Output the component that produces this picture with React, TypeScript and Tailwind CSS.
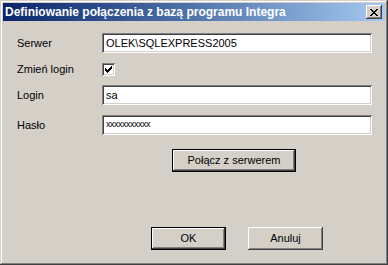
import { useState } from 'react'

const sunken =
  'shadow-[inset_1px_1px_#808080,inset_-1px_-1px_#ffffff,inset_2px_2px_#404040,inset_-2px_-2px_#d4d0c8]'
const raised =
  'shadow-[inset_-1px_-1px_#404040,inset_1px_1px_#ffffff,inset_-2px_-2px_#808080,inset_2px_2px_#d4d0c8]'
const raisedDefault =
  'border border-black shadow-[inset_-1px_-1px_#404040,inset_1px_1px_#ffffff,inset_-2px_-2px_#808080,inset_2px_2px_#d4d0c8]'

function Field({ label, value, masked }: { label: string; value: string; masked?: boolean }) {
  return (
    <div className="flex items-center h-[20px]">
      <span className="w-[85px]">{label}</span>
      <div className={`flex-1 h-[20px] bg-white pl-[4px] flex items-center ${sunken}`}>
        {masked ? <span className="text-[9px] tracking-[-0.5px]">{value}</span> : value}
      </div>
    </div>
  )
}

export default function App() {
  const [checked, setChecked] = useState(true)

  return (
    <div
      className="w-[388px] h-[265px] bg-[#d4d0c8] p-[3px] flex flex-col text-[11px] text-black shadow-[inset_-1px_-1px_#404040,inset_1px_1px_#d4d0c8,inset_-2px_-2px_#808080,inset_2px_2px_#ffffff]"
      style={{ fontFamily: '"Liberation Sans", Arial, sans-serif' }}
    >
      {/* Title bar */}
      <div className="h-[18px] flex items-center justify-between pl-[2px] pr-[3px] bg-gradient-to-r from-[#0a246a] to-[#a6caf0]">
        <span className="text-white font-bold text-[12px]">
          Definiowanie połączenia z bazą programu Integra
        </span>
        <button className={`w-[16px] h-[14px] bg-[#d4d0c8] flex items-center justify-center ${raised}`}>
          <svg width="8" height="7" viewBox="0 0 8 7">
            <path d="M0 0h2v1h1v1h2V1h1V0h2v1H7v1H6v1H5v1h1v1h1v1h1v1H6V6H5V5H3v1H2v1H0V6h1V5h1V4h1V3H2V2H1V1H0z" fill="#000" />
          </svg>
        </button>
      </div>

      {/* Form */}
      <div className="flex flex-col pl-[14px] pr-[13px] mt-[12px]">
        <Field label="Serwer" value="OLEK\SQLEXPRESS2005" />
        <div className="flex items-center h-[13px] mt-[10px]">
          <span className="w-[85px]">Zmień login</span>
          <button
            onClick={() => setChecked(!checked)}
            className={`w-[13px] h-[13px] bg-white flex items-center justify-center ${sunken}`}
          >
            {checked && (
              <svg width="7" height="7" viewBox="0 0 7 7" shapeRendering="crispEdges">
                <rect x="6" y="0" width="1" height="3" fill="#000" />
                <rect x="5" y="1" width="1" height="3" fill="#000" />
                <rect x="4" y="2" width="1" height="3" fill="#000" />
                <rect x="3" y="3" width="1" height="3" fill="#000" />
                <rect x="2" y="4" width="1" height="3" fill="#000" />
                <rect x="1" y="3" width="1" height="3" fill="#000" />
                <rect x="0" y="2" width="1" height="3" fill="#000" />
              </svg>
            )}
          </button>
        </div>
        <div className="mt-[9px]">
          <Field label="Login" value="sa" />
        </div>
        <div className="mt-[10px]">
          <Field label="Hasło" value="xxxxxxxxxxx" masked />
        </div>
      </div>

      <div className="flex mt-[14px] pl-[169px]">
        <button className={`w-[124px] h-[23px] bg-[#d4d0c8] ${raisedDefault}`}>Połącz z serwerem</button>
      </div>

      <div className="flex gap-[22px] mt-[55px] pl-[148px]">
        <button className={`w-[75px] h-[23px] bg-[#d4d0c8] ${raisedDefault}`}>OK</button>
        <button className={`w-[75px] h-[23px] bg-[#d4d0c8] ${raised}`}>Anuluj</button>
      </div>
    </div>
  )
}
